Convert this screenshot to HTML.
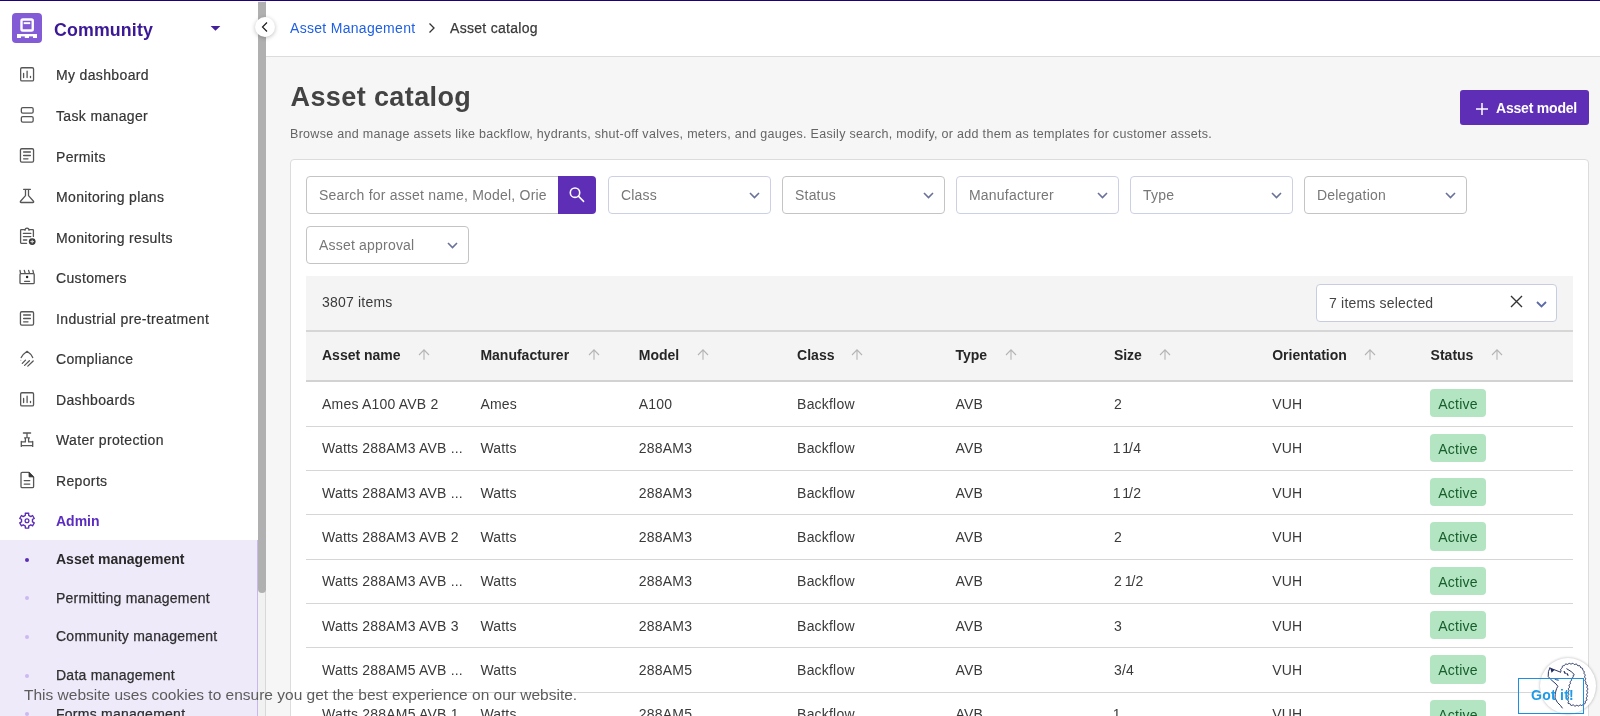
<!DOCTYPE html>
<html><head><meta charset="utf-8"><style>
*{box-sizing:border-box;margin:0;padding:0}
html,body{width:1600px;height:716px;overflow:hidden;background:#fff;font-family:"Liberation Sans",sans-serif;color:#333}
.wrap{position:absolute;left:0;top:0;width:1600px;height:716px;will-change:transform}
body{position:relative}
.abs{position:absolute}
.topline{left:0;top:0;width:1600px;height:1px;background:#1c0080}
.side{left:0;top:1px;width:258px;height:715px;background:#fff}
.logo{left:12px;top:13px;width:30px;height:30px;border-radius:4px;background:#845bd6}
.comm{left:54px;top:19.6px;font-size:17.8px;font-weight:bold;color:#3b1896;line-height:20px;letter-spacing:0.13px;white-space:nowrap}
.tri{left:210.75px;top:26px;width:0;height:0;border-left:4.75px solid transparent;border-right:4.75px solid transparent;border-top:4.6px solid #44209a}
.item{position:absolute;left:0;width:258px;height:20px;line-height:20px;font-size:14px;letter-spacing:0.35px;color:#353535;-webkit-text-stroke:0.2px #353535;white-space:nowrap}
.item span{position:absolute;left:56px;top:0}
.item svg{position:absolute}
.subbg{left:0;top:540px;width:258px;height:176px;background:#efeafa;border-right:1px solid #c9b8f0}
.sub{position:absolute;left:0;width:258px;height:20px;line-height:20px;font-size:14px;letter-spacing:0.25px;color:#2f2f2f;-webkit-text-stroke:0.25px #2f2f2f;white-space:nowrap}
.sub span{position:absolute;left:56px;top:0}
.sub i{position:absolute;left:25.3px;top:8.6px;width:4px;height:4px;border-radius:50%;background:#cbb9ef}
.strack{left:258px;top:1px;width:8px;height:715px;background:#f1f1f1;border-right:1px solid #d8d8d8}
.sthumb{left:258px;top:2px;width:8px;height:591px;background:#b0b0b0;border-radius:0 0 4px 4px}
.hdr{left:266px;top:1px;width:1334px;height:56px;background:#fff;border-bottom:1px solid #dcdcdc}
.main{left:266px;top:57px;width:1334px;height:659px;background:#f6f6f6}
.collapse{left:255px;top:17px;width:20px;height:20px;border-radius:50%;background:#fff;box-shadow:0 1px 4px rgba(0,0,0,.25)}
.bc{top:18px;font-size:14px;line-height:20px;letter-spacing:0.3px;white-space:nowrap}
.title{left:290.5px;top:81px;font-size:27px;font-weight:bold;color:#434343;line-height:32px;letter-spacing:0.4px;white-space:nowrap}
.desc{left:290px;top:125.6px;font-size:12.5px;color:#656565;line-height:16px;letter-spacing:0.3px;white-space:nowrap}
.btn{left:1460px;top:90px;width:129px;height:35px;border-radius:3px;background:#5e2eb6;color:#fff}
.btn span{position:absolute;left:36px;top:7.5px;font-size:14px;font-weight:bold;line-height:20px;letter-spacing:-0.2px;white-space:nowrap}
.card{left:290px;top:159px;width:1299px;height:600px;background:#fff;border:1px solid #dcdcdc;border-radius:4px}
.inp{height:38px;background:#fff;border:1px solid #c4c4c4;border-radius:4px}
.inp span{position:absolute;left:12px;top:8px;font-size:14px;line-height:20px;color:#777;letter-spacing:0.2px;white-space:nowrap}
.inp svg{position:absolute;right:10px;top:15px}
.sbtn{left:558px;top:176px;width:38px;height:38px;background:#5e2eb6;border-radius:0 4px 4px 0}
.tbar{left:306px;top:276px;width:1267px;height:54px;background:#f4f4f4}
.thead{left:306px;top:330px;width:1267px;height:52px;background:#f4f4f4;border-top:2px solid #d6d6d6;border-bottom:2px solid #d2d2d2}
.row{position:absolute;left:306px;width:1267px;height:44.35px;background:#fff;border-bottom:1px solid #d6d6d6}
.cell{position:absolute;font-size:14px;line-height:20px;color:#3a3a3a;letter-spacing:0.2px;white-space:nowrap}
.hcell{position:absolute;font-size:14px;line-height:20px;color:#262626;font-weight:bold;white-space:nowrap}
.badge{position:absolute;width:56px;height:28.2px;border-radius:4px;background:#b3e5c3;color:#175e2a;font-size:14px;line-height:30px;text-align:center;letter-spacing:0.2px}
.cookie{left:24px;top:685.3px;font-size:15.5px;color:#5c5c5c;line-height:20px;white-space:nowrap}
</style></head><body><div class="wrap">
<div class="abs topline"></div>
<div class="abs side"></div>
<div class="abs logo"><svg width="30" height="30" viewBox="0 0 30 30" style="position:absolute;left:0;top:0">
<rect x="9.5" y="6.45" width="11.25" height="11.1" rx="1.3" fill="none" stroke="#fff" stroke-width="2.4"/>
<rect x="11.7" y="9.2" width="6.5" height="1.9" fill="#fff"/>
<rect x="5" y="21" width="20" height="2.4" fill="#fff"/>
<rect x="5" y="23" width="4" height="2" fill="#fff"/>
<rect x="12.8" y="23" width="4.2" height="2" fill="#fff"/>
<rect x="21" y="23" width="4" height="2" fill="#fff"/>
</svg></div>
<div class="abs comm">Community</div>
<svg class="abs" style="left:208px;top:24px" width="16" height="10" viewBox="0 0 16 10"><path d="M2.6 2H12.4L7.5 6.7Z" fill="#44209a"/></svg>
<div class="item" style="top:65.40px"><svg width="26" height="26" viewBox="0 0 26 26" style="left:14px;top:-3.40px"><rect x="6.65" y="5.75" width="12.9" height="13.2" rx="1.3" fill="none" stroke="#565656" stroke-width="1.3" stroke-linecap="round" stroke-linejoin="round"/><path d="M9.6 11.4V15.5M13.1 9.2V15.5M16.5 14.3V15.5" fill="none" stroke="#565656" stroke-width="1.3" stroke-linecap="round" stroke-linejoin="round" stroke-width="1.4"/></svg><span>My dashboard</span></div>
<div class="item" style="top:105.95px"><svg width="26" height="26" viewBox="0 0 26 26" style="left:14px;top:-3.95px"><rect x="7.35" y="5.65" width="11.8" height="5.5" rx="1.4" fill="none" stroke="#565656" stroke-width="1.3" stroke-linecap="round" stroke-linejoin="round"/><rect x="7.35" y="14.55" width="11.8" height="5.6" rx="1.4" fill="none" stroke="#565656" stroke-width="1.3" stroke-linecap="round" stroke-linejoin="round"/></svg><span>Task manager</span></div>
<div class="item" style="top:146.50px"><svg width="26" height="26" viewBox="0 0 26 26" style="left:14px;top:-3.50px"><rect x="6.45" y="5.75" width="13.1" height="13.4" rx="1.3" fill="none" stroke="#565656" stroke-width="1.3" stroke-linecap="round" stroke-linejoin="round"/><path d="M9.6 9H16.4M9.6 12.5H16.4M9.6 15.8H14" fill="none" stroke="#565656" stroke-width="1.3" stroke-linecap="round" stroke-linejoin="round"/></svg><span>Permits</span></div>
<div class="item" style="top:187.05px"><svg width="26" height="26" viewBox="0 0 26 26" style="left:14px;top:-3.05px"><path d="M9.6 5.3H16.4M11.5 5.3V11.6L6.5 17.2Q5.9 18.5 7.2 18.5H18.8Q20.1 18.5 19.5 17.2L14.5 11.6V5.3" fill="none" stroke="#565656" stroke-width="1.3" stroke-linecap="round" stroke-linejoin="round"/></svg><span>Monitoring plans</span></div>
<div class="item" style="top:227.60px"><svg width="26" height="26" viewBox="0 0 26 26" style="left:14px;top:-3.60px"><path d="M11 5.6H7.3Q6.6 5.6 6.6 6.3V18.6Q6.6 19.3 7.3 19.3H12.6M15 5.6H18.7Q19.4 5.6 19.4 6.3V12.4M11 6.3Q11 4.1 13 4.1Q15 4.1 15 6.3" fill="none" stroke="#565656" stroke-width="1.3" stroke-linecap="round" stroke-linejoin="round"/><path d="M9.4 9.4H16.8M9.4 12.6H16.8M9.4 16H12.8" fill="none" stroke="#565656" stroke-width="1.3" stroke-linecap="round" stroke-linejoin="round"/><circle cx="18.2" cy="17.6" r="3.4" fill="#3a3a3a"/><path d="M18.2 15.8V19.4M16.4 17.6H20" stroke="#ddd" stroke-width="1"/></svg><span>Monitoring results</span></div>
<div class="item" style="top:268.15px"><svg width="26" height="26" viewBox="0 0 26 26" style="left:14px;top:-3.15px"><rect x="6" y="8.6" width="14.2" height="10.1" rx="1" fill="none" stroke="#565656" stroke-width="1.3" stroke-linecap="round" stroke-linejoin="round"/><path d="M6 5.4L6.5 8.4M10.3 5.4L11.2 8.4M14.6 5.4L15.5 8.4M18.9 5.4L19.6 8.4" fill="none" stroke="#565656" stroke-width="1.3" stroke-linecap="round" stroke-linejoin="round" stroke-width="1.5"/><circle cx="13.1" cy="12" r="1.2" fill="#222"/><path d="M10.6 16.3H15.6" fill="none" stroke="#565656" stroke-width="1.3" stroke-linecap="round" stroke-linejoin="round" stroke="#222" stroke-width="1.4"/></svg><span>Customers</span></div>
<div class="item" style="top:308.70px"><svg width="26" height="26" viewBox="0 0 26 26" style="left:14px;top:-3.20px"><rect x="6.45" y="5.75" width="13.1" height="13.4" rx="1.3" fill="none" stroke="#565656" stroke-width="1.3" stroke-linecap="round" stroke-linejoin="round"/><path d="M9.6 9H16.4M9.6 12.5H16.4M9.6 15.8H14" fill="none" stroke="#565656" stroke-width="1.3" stroke-linecap="round" stroke-linejoin="round"/></svg><span>Industrial pre-treatment</span></div>
<div class="item" style="top:349.25px"><svg width="26" height="26" viewBox="0 0 26 26" style="left:14px;top:-3.25px"><path d="M7.2 11.6Q8.5 8.5 13.1 5.3Q17.2 8 18.7 11.6" fill="none" stroke="#565656" stroke-width="1.3" stroke-linecap="round" stroke-linejoin="round"/><path d="M8.3 17.4L11.5 14.1M10.6 19.4L15.4 14.7M13.8 20.1L19.2 15" fill="none" stroke="#565656" stroke-width="1.3" stroke-linecap="round" stroke-linejoin="round"/><circle cx="6.8" cy="14.3" r="0.5" fill="#999"/></svg><span>Compliance</span></div>
<div class="item" style="top:389.80px"><svg width="26" height="26" viewBox="0 0 26 26" style="left:14px;top:-3.30px"><rect x="6.65" y="5.75" width="12.9" height="13.2" rx="1.3" fill="none" stroke="#565656" stroke-width="1.3" stroke-linecap="round" stroke-linejoin="round"/><path d="M9.6 11.4V15.5M13.1 9.2V15.5M16.5 14.3V15.5" fill="none" stroke="#565656" stroke-width="1.3" stroke-linecap="round" stroke-linejoin="round" stroke-width="1.4"/></svg><span>Dashboards</span></div>
<div class="item" style="top:430.35px"><svg width="26" height="26" viewBox="0 0 26 26" style="left:14px;top:-3.35px"><path d="M9.4 6H16.6M13 6V10.3M10.6 10.9H12M14 10.9H15.4M11.4 11V14.9H7.3M14.6 11V14.9H18.7M7.3 14.3V19.4M18.7 14.3V19.4M7.3 18.6H18.7" fill="none" stroke="#565656" stroke-width="1.3" stroke-linecap="round" stroke-linejoin="round"/></svg><span>Water protection</span></div>
<div class="item" style="top:470.90px"><svg width="26" height="26" viewBox="0 0 26 26" style="left:14px;top:-2.90px"><path d="M8.2 4.4H14.9L19.6 9.1V18.4Q19.6 19.6 18.4 19.6H8.2Q7 19.6 7 18.4V5.6Q7 4.4 8.2 4.4Z" fill="none" stroke="#565656" stroke-width="1.3" stroke-linecap="round" stroke-linejoin="round"/><path d="M15.1 4.6V8.8H19.4Z" fill="#333" stroke="#333" stroke-width="1"/><path d="M10.2 12.6H15.8M10.2 16.1H15.8" fill="none" stroke="#565656" stroke-width="1.3" stroke-linecap="round" stroke-linejoin="round"/></svg><span>Reports</span></div>
<div class="item" style="top:511.45px;color:#5a2dc0;font-weight:bold;letter-spacing:0;-webkit-text-stroke:0"><svg width="26" height="26" viewBox="0 0 26 26" style="left:14px;top:-3.45px"><path d="M11.29 5.29 L14.71 5.29 L14.64 7.34 L16.82 8.60 L18.56 7.52 L20.27 10.48 L18.46 11.44 L18.46 13.96 L20.27 14.92 L18.56 17.88 L16.82 16.80 L14.64 18.06 L14.71 20.11 L11.29 20.11 L11.36 18.06 L9.18 16.80 L7.44 17.88 L5.73 14.92 L7.54 13.96 L7.54 11.44 L5.73 10.48 L7.44 7.52 L9.18 8.60 L11.36 7.34Z" fill="none" stroke="#5b2db5" stroke-width="1.35" stroke-linejoin="round"/><circle cx="13" cy="12.7" r="1.9" fill="none" stroke="#5b2db5" stroke-width="1.3"/></svg><span>Admin</span></div>
<div class="abs subbg"></div>
<div class="sub" style="top:549.20px;font-weight:bold;letter-spacing:0;color:#2a2a2a;-webkit-text-stroke:0"><i style="background:#5b2db5"></i><span>Asset management</span></div>
<div class="sub" style="top:587.80px;"><i style=""></i><span>Permitting management</span></div>
<div class="sub" style="top:626.40px;"><i style=""></i><span>Community management</span></div>
<div class="sub" style="top:665.00px;"><i style=""></i><span>Data management</span></div>
<div class="sub" style="top:703.60px;"><i style=""></i><span>Forms management</span></div>
<div class="abs strack"></div>
<div class="abs sthumb"></div>
<div class="abs hdr"></div>
<div class="abs main"></div>
<div class="abs collapse"><svg width="20" height="20" viewBox="0 0 20 20"><path d="M12 5.5L7.5 10l4.5 4.5" fill="none" stroke="#1e1e1e" stroke-width="1.2"/></svg></div>
<div class="abs bc" style="left:290px;color:#1f5fe3">Asset Management</div>
<svg class="abs" style="left:428px;top:22px" width="8" height="12" viewBox="0 0 8 12"><path d="M1.5 1.5L6 6l-4.5 4.5" fill="none" stroke="#333" stroke-width="1.3"/></svg>
<div class="abs bc" style="left:450px;color:#3a3a3a;-webkit-text-stroke:0.25px #3a3a3a">Asset catalog</div>
<div class="abs title">Asset catalog</div>
<div class="abs desc">Browse and manage assets like backflow, hydrants, shut-off valves, meters, and gauges. Easily search, modify, or add them as templates for customer assets.</div>
<div class="abs btn"><svg width="12" height="12" viewBox="0 0 12 12" style="position:absolute;left:16px;top:12.5px"><path d="M6 0v12M0 6h12" stroke="#fff" stroke-width="1.5"/></svg><span>Asset model</span></div>
<div class="abs card"></div>
<div class="abs inp" style="left:306px;top:176px;width:253px;border-radius:4px 0 0 4px"><span>Search for asset name, Model, Orie</span></div>
<div class="abs sbtn"><svg width="38" height="38" viewBox="0 0 38 38"><circle cx="17" cy="16.7" r="4.7" fill="none" stroke="#fff" stroke-width="1.6"/><path d="M20.4 20.1L25.6 25.4" stroke="#fff" stroke-width="1.5" stroke-linecap="round"/></svg></div>
<div class="abs inp" style="left:608px;top:176px;width:162.5px;border-color:#ccd0e4"><span>Class</span><svg width="11" height="7" viewBox="0 0 11 7"><path d="M1 1 L5.5 5.5 L10 1" fill="none" stroke="#69709a" stroke-width="1.6"/></svg></div>
<div class="abs inp" style="left:782px;top:176px;width:162.5px;border-color:#c4c4c4"><span>Status</span><svg width="11" height="7" viewBox="0 0 11 7"><path d="M1 1 L5.5 5.5 L10 1" fill="none" stroke="#69709a" stroke-width="1.6"/></svg></div>
<div class="abs inp" style="left:956px;top:176px;width:162.5px;border-color:#ccd0e4"><span>Manufacturer</span><svg width="11" height="7" viewBox="0 0 11 7"><path d="M1 1 L5.5 5.5 L10 1" fill="none" stroke="#69709a" stroke-width="1.6"/></svg></div>
<div class="abs inp" style="left:1130px;top:176px;width:162.5px;border-color:#ccd0e4"><span>Type</span><svg width="11" height="7" viewBox="0 0 11 7"><path d="M1 1 L5.5 5.5 L10 1" fill="none" stroke="#69709a" stroke-width="1.6"/></svg></div>
<div class="abs inp" style="left:1304px;top:176px;width:162.5px;border-color:#c4c4c4"><span>Delegation</span><svg width="11" height="7" viewBox="0 0 11 7"><path d="M1 1 L5.5 5.5 L10 1" fill="none" stroke="#69709a" stroke-width="1.6"/></svg></div>
<div class="abs inp" style="left:306px;top:226px;width:162.5px"><span>Asset approval</span><svg width="11" height="7" viewBox="0 0 11 7"><path d="M1 1 L5.5 5.5 L10 1" fill="none" stroke="#69709a" stroke-width="1.6"/></svg></div>
<div class="abs tbar"></div>
<div class="abs cell" style="left:322px;top:292px;color:#3a3a3a">3807 items</div>
<div class="abs inp" style="left:1316px;top:284px;width:241px;height:38px;border-color:#c8cce0"><span style="color:#444;top:8px">7 items selected</span><svg width="13" height="13" viewBox="0 0 13 13" style="position:absolute;left:193px;top:10px"><path d="M1 1l11 11M12 1L1 12" stroke="#333" stroke-width="1.4"/></svg><svg width="11" height="7" viewBox="0 0 11 7" style="position:absolute;left:219px;top:16px"><path d="M1 1 L5.5 5.5 L10 1" fill="none" stroke="#5d6aa8" stroke-width="1.8"/></svg></div>
<div class="abs thead"></div>
<div class="hcell" style="left:322.0px;top:345px">Asset name</div>
<svg class="abs" style="left:417.6px;top:348px" width="12" height="13" viewBox="0 0 12 13"><path d="M6 11.7V1.8M1 7l5-5.2 5 5.2" fill="none" stroke="#b4b4b4" stroke-width="1.1"/></svg>
<div class="hcell" style="left:480.4px;top:345px">Manufacturer</div>
<svg class="abs" style="left:588px;top:348px" width="12" height="13" viewBox="0 0 12 13"><path d="M6 11.7V1.8M1 7l5-5.2 5 5.2" fill="none" stroke="#b4b4b4" stroke-width="1.1"/></svg>
<div class="hcell" style="left:638.8px;top:345px">Model</div>
<svg class="abs" style="left:697px;top:348px" width="12" height="13" viewBox="0 0 12 13"><path d="M6 11.7V1.8M1 7l5-5.2 5 5.2" fill="none" stroke="#b4b4b4" stroke-width="1.1"/></svg>
<div class="hcell" style="left:797.1px;top:345px">Class</div>
<svg class="abs" style="left:851px;top:348px" width="12" height="13" viewBox="0 0 12 13"><path d="M6 11.7V1.8M1 7l5-5.2 5 5.2" fill="none" stroke="#b4b4b4" stroke-width="1.1"/></svg>
<div class="hcell" style="left:955.5px;top:345px">Type</div>
<svg class="abs" style="left:1005px;top:348px" width="12" height="13" viewBox="0 0 12 13"><path d="M6 11.7V1.8M1 7l5-5.2 5 5.2" fill="none" stroke="#b4b4b4" stroke-width="1.1"/></svg>
<div class="hcell" style="left:1113.9px;top:345px">Size</div>
<svg class="abs" style="left:1159px;top:348px" width="12" height="13" viewBox="0 0 12 13"><path d="M6 11.7V1.8M1 7l5-5.2 5 5.2" fill="none" stroke="#b4b4b4" stroke-width="1.1"/></svg>
<div class="hcell" style="left:1272.2px;top:345px">Orientation</div>
<svg class="abs" style="left:1364px;top:348px" width="12" height="13" viewBox="0 0 12 13"><path d="M6 11.7V1.8M1 7l5-5.2 5 5.2" fill="none" stroke="#b4b4b4" stroke-width="1.1"/></svg>
<div class="hcell" style="left:1430.6px;top:345px">Status</div>
<svg class="abs" style="left:1491px;top:348px" width="12" height="13" viewBox="0 0 12 13"><path d="M6 11.7V1.8M1 7l5-5.2 5 5.2" fill="none" stroke="#b4b4b4" stroke-width="1.1"/></svg>
<div class="row" style="top:382.30px"></div>
<div class="cell" style="left:322.0px;top:394.00px;">Ames A100 AVB 2</div>
<div class="cell" style="left:480.4px;top:394.00px;">Ames</div>
<div class="cell" style="left:638.8px;top:394.00px;">A100</div>
<div class="cell" style="left:797.1px;top:394.00px;">Backflow</div>
<div class="cell" style="left:955.5px;top:394.00px;">AVB</div>
<div class="cell" style="left:1113.9px;top:394.00px;word-spacing:-1.3px;">2</div>
<div class="cell" style="left:1272.2px;top:394.00px;">VUH</div>
<div class="badge" style="left:1430px;top:389.30px">Active</div>
<div class="row" style="top:426.65px"></div>
<div class="cell" style="left:322.0px;top:438.35px;">Watts 288AM3 AVB ...</div>
<div class="cell" style="left:480.4px;top:438.35px;">Watts</div>
<div class="cell" style="left:638.8px;top:438.35px;">288AM3</div>
<div class="cell" style="left:797.1px;top:438.35px;">Backflow</div>
<div class="cell" style="left:955.5px;top:438.35px;">AVB</div>
<div class="cell" style="left:1113.9px;top:438.35px;word-spacing:-1.3px;margin-left:-1.2px;"><span style="letter-spacing:-1px">1</span> <span style="letter-spacing:-1px">1</span>/4</div>
<div class="cell" style="left:1272.2px;top:438.35px;">VUH</div>
<div class="badge" style="left:1430px;top:433.65px">Active</div>
<div class="row" style="top:471.00px"></div>
<div class="cell" style="left:322.0px;top:482.70px;">Watts 288AM3 AVB ...</div>
<div class="cell" style="left:480.4px;top:482.70px;">Watts</div>
<div class="cell" style="left:638.8px;top:482.70px;">288AM3</div>
<div class="cell" style="left:797.1px;top:482.70px;">Backflow</div>
<div class="cell" style="left:955.5px;top:482.70px;">AVB</div>
<div class="cell" style="left:1113.9px;top:482.70px;word-spacing:-1.3px;margin-left:-1.2px;"><span style="letter-spacing:-1px">1</span> <span style="letter-spacing:-1px">1</span>/2</div>
<div class="cell" style="left:1272.2px;top:482.70px;">VUH</div>
<div class="badge" style="left:1430px;top:478.00px">Active</div>
<div class="row" style="top:515.35px"></div>
<div class="cell" style="left:322.0px;top:527.05px;">Watts 288AM3 AVB 2</div>
<div class="cell" style="left:480.4px;top:527.05px;">Watts</div>
<div class="cell" style="left:638.8px;top:527.05px;">288AM3</div>
<div class="cell" style="left:797.1px;top:527.05px;">Backflow</div>
<div class="cell" style="left:955.5px;top:527.05px;">AVB</div>
<div class="cell" style="left:1113.9px;top:527.05px;word-spacing:-1.3px;">2</div>
<div class="cell" style="left:1272.2px;top:527.05px;">VUH</div>
<div class="badge" style="left:1430px;top:522.35px">Active</div>
<div class="row" style="top:559.70px"></div>
<div class="cell" style="left:322.0px;top:571.40px;">Watts 288AM3 AVB ...</div>
<div class="cell" style="left:480.4px;top:571.40px;">Watts</div>
<div class="cell" style="left:638.8px;top:571.40px;">288AM3</div>
<div class="cell" style="left:797.1px;top:571.40px;">Backflow</div>
<div class="cell" style="left:955.5px;top:571.40px;">AVB</div>
<div class="cell" style="left:1113.9px;top:571.40px;word-spacing:-1.3px;">2 <span style="letter-spacing:-1px">1</span>/2</div>
<div class="cell" style="left:1272.2px;top:571.40px;">VUH</div>
<div class="badge" style="left:1430px;top:566.70px">Active</div>
<div class="row" style="top:604.05px"></div>
<div class="cell" style="left:322.0px;top:615.75px;">Watts 288AM3 AVB 3</div>
<div class="cell" style="left:480.4px;top:615.75px;">Watts</div>
<div class="cell" style="left:638.8px;top:615.75px;">288AM3</div>
<div class="cell" style="left:797.1px;top:615.75px;">Backflow</div>
<div class="cell" style="left:955.5px;top:615.75px;">AVB</div>
<div class="cell" style="left:1113.9px;top:615.75px;word-spacing:-1.3px;">3</div>
<div class="cell" style="left:1272.2px;top:615.75px;">VUH</div>
<div class="badge" style="left:1430px;top:611.05px">Active</div>
<div class="row" style="top:648.40px"></div>
<div class="cell" style="left:322.0px;top:660.10px;">Watts 288AM5 AVB ...</div>
<div class="cell" style="left:480.4px;top:660.10px;">Watts</div>
<div class="cell" style="left:638.8px;top:660.10px;">288AM5</div>
<div class="cell" style="left:797.1px;top:660.10px;">Backflow</div>
<div class="cell" style="left:955.5px;top:660.10px;">AVB</div>
<div class="cell" style="left:1113.9px;top:660.10px;word-spacing:-1.3px;">3/4</div>
<div class="cell" style="left:1272.2px;top:660.10px;">VUH</div>
<div class="badge" style="left:1430px;top:655.40px">Active</div>
<div class="row" style="top:692.75px"></div>
<div class="cell" style="left:322.0px;top:704.45px;">Watts 288AM5 AVB 1</div>
<div class="cell" style="left:480.4px;top:704.45px;">Watts</div>
<div class="cell" style="left:638.8px;top:704.45px;">288AM5</div>
<div class="cell" style="left:797.1px;top:704.45px;">Backflow</div>
<div class="cell" style="left:955.5px;top:704.45px;">AVB</div>
<div class="cell" style="left:1113.9px;top:704.45px;word-spacing:-1.3px;margin-left:-1.2px;"><span style="letter-spacing:-1px">1</span></div>
<div class="cell" style="left:1272.2px;top:704.45px;">VUH</div>
<div class="badge" style="left:1430px;top:699.75px">Active</div>
<div class="abs cookie">This website uses cookies to ensure you get the best experience on our website.</div>
<div class="abs" style="left:1540px;top:658px;width:56px;height:56px;border-radius:50%;background:#fff;box-shadow:0 0 3px rgba(0,0,0,.3)"></div>
<svg class="abs" style="left:1530px;top:650px" width="70" height="66" viewBox="0 0 70 66"><g fill="none" stroke="#1d2b5c" stroke-width="0.95" stroke-linecap="round" stroke-linejoin="round">
<path d="M19.8 18Q17.8 21 18.2 26.5Q20 29 23 31.4Q26.5 34 27.9 36.3Q25.2 40 25 48Q27 53 30.4 55.4L32.3 58"/>
<path d="M19.8 18L30.4 22.1"/>
<path d="M30.40 22.10 L30.94 21.62 L31.09 21.03 L30.86 20.34 L30.64 19.65 L30.82 19.07 L31.37 18.59 L31.82 18.25 L32.17 17.72 L32.22 16.94 L32.36 16.23 L32.88 15.82 L33.57 15.67 L34.26 15.66 L34.75 15.20 L35.15 14.51 L35.66 14.09 L36.36 14.12 L37.03 14.32 L37.68 14.36 L38.29 13.93 L38.89 13.44 L39.54 13.40 L40.22 13.78 L40.90 14.09 L41.45 13.90 L42.17 13.53 L42.85 13.36 L43.46 13.69 L44.03 14.27 L44.65 14.53 L45.34 14.30 L46.16 13.98 L46.75 14.23 L47.14 14.87 L47.53 15.52 L48.13 15.76 L48.90 15.64 L49.62 15.62 L50.21 16.10 L50.30 16.87 L50.53 17.52 L51.11 17.84 L51.88 17.97 L52.47 18.28 L52.71 18.92 L52.74 19.60 L52.80 20.23 L53.29 20.70 L53.92 21.11 L54.27 21.63 L54.19 22.31 L53.99 23.04 L54.07 23.57 L54.53 24.15 L55.07 24.73 L55.18 25.37 L54.85 26.08 L54.58 26.78 L54.79 27.41 L55.36 27.99 L55.69 28.61 L55.51 29.27 L55.08 29.95 L54.93 30.60 L55.28 31.22 L55.79 31.84 L55.87 32.31 L55.82 33.08 L55.74 33.85 L56.09 34.41 L56.80 34.78 L57.39 35.21 L57.55 35.99 L57.08 36.67 L56.89 37.34 L57.24 38.00 L57.72 38.66 L57.78 39.32 L57.35 40.00 L56.93 40.59 L56.96 41.22 L57.36 41.88 L57.64 42.53 L57.44 43.15 L56.93 43.74 L56.60 44.34 L56.76 44.98 L57.16 45.65 L57.32 46.29 L57.00 46.89 L56.47 47.47 L56.25 48.08 L56.50 48.74 L56.89 49.41 L56.87 50.20 L56.28 50.57 L55.61 50.92 L55.28 51.44 L55.32 52.15 L55.40 52.89 L55.14 53.44 L54.50 53.80 L53.72 53.73 L53.15 54.11 L52.77 54.84 L52.30 55.40 L51.52 55.49 L50.86 55.09 L50.24 54.97 L49.65 55.30 L49.08 55.81 L48.48 56.02 L47.85 55.77 L47.19 55.38 L46.57 55.31 L46.02 55.70 L45.32 56.04 L44.68 56.01 L44.12 55.52 L43.56 55.01 L42.93 54.93 L42.24 55.25 L41.56 55.52 L40.81 55.27 L40.57 54.55 L40.26 53.92 L39.68 53.68 L38.91 53.68 L38.07 53.30 L38.12 52.61 L38.46 51.87 L38.52 51.18 L38.07 50.61 L37.46 49.96 L37.46 49.33 L37.91 48.75 L38.40 48.17 L38.48 47.55 L38.15 46.87 L37.84 46.20 L37.98 45.58 L38.50 45.00 L38.86 44.39 L38.75 43.76 L38.32 43.12 L38.05 42.48 L38.27 41.86 L38.76 41.26 L39.02 40.64 L38.80 40.04 L38.44 39.31 L38.40 38.64 L38.86 38.06 L39.42 37.49 L39.56 36.85 L39.25 36.14 L39.00 35.37 L39.30 34.78 L39.96 34.30 L40.43 33.76 L40.40 33.06 L40.14 32.29 L40.18 31.62 L40.72 31.10 L41.33 30.67 L41.64 30.13 L41.57 29.41 L41.49 28.67 L41.78 28.13 L42.42 27.76 L43.04 27.39 L43.28 26.81 L43.18 26.07 L43.14 25.36 L43.80 25.00"/>
<path d="M44.3 24.5Q42 21.5 36.8 18.8"/>
<path d="M24.5 28.8Q26.5 30.2 28.3 30.2"/>
</g>
<path d="M20.3 18.3L24.6 19.8L21.6 22.8Z" fill="#1d2b5c"/>
<path d="M34.2 21.6L35.2 23.4M37 23.6L38 25.3" stroke="#1d2b5c" stroke-width="1.2" stroke-linecap="round"/>
</svg>
<div class="abs" style="left:1518px;top:677.7px;width:66px;height:36px;border:1.2px solid #1c8fe0"></div>
<div class="abs" style="left:1531px;top:686.3px;font-size:14px;font-weight:bold;line-height:18px;letter-spacing:0.25px;color:#1f9ae6;white-space:nowrap">Got it!</div>
</div></body></html>
